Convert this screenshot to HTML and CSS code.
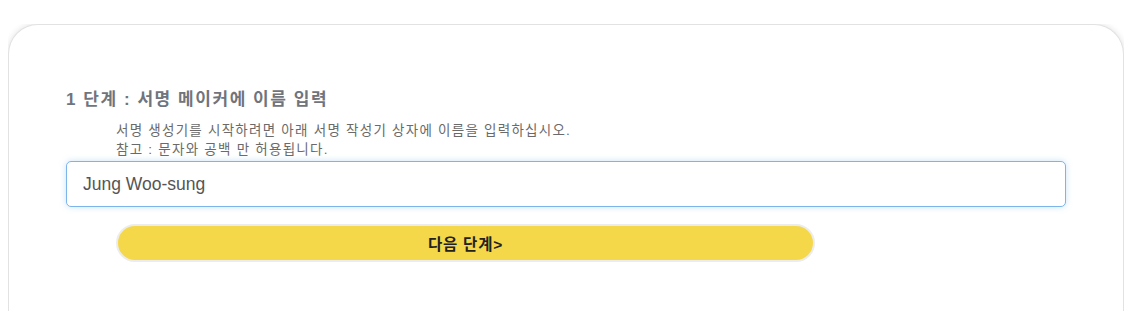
FILE: index.html
```html
<!DOCTYPE html>
<html lang="ko">
<head>
    <meta charset="UTF-8">
    <meta name="viewport" content="width=device-width, initial-scale=1.0">
    <title>서명 메이커</title>
    <link rel="stylesheet" href="styles.css">
</head>
<body>

    <div class="card">
        <h3 class="step-title">1 단계 : 서명 메이커에 이름 입력</h3>
        <p class="step-desc">
            서명 생성기를 시작하려면 아래 서명 작성기 상자에 이름을 입력하십시오.<br>
            참고 : 문자와 공백 만 허용됩니다.
        </p>
        <input type="text" class="name-input" value="Jung Woo-sung">
        <button class="next-btn">다음 단계&gt;</button>
    </div>

</body>
</html>
```

FILE: styles.css
```css
body {
    font-family: "Liberation Sans", "Noto Sans CJK KR", Arial, sans-serif;
    margin: 24px 11px 0 8px;
    background-color: #fff;
}
.card {
    border: 1px solid #e2e2e2;
    border-bottom: none;
    border-radius: 30px 30px 0 0;
    box-shadow: 0 0 6px rgba(0, 0, 0, 0.12);
    padding: 65px 57px 60px 57px;
    background-color: #fff;
}
.step-title {
    margin: 0;
    font-size: 17px;
    line-height: 20px;
    font-weight: bold;
    letter-spacing: 1.55px;
    color: #70747c;
}
.step-desc {
    margin: 11px 0 2px 50px;
    font-size: 13.5px;
    line-height: 19px;
    letter-spacing: 1.25px;
    color: #6a6a6a;
}
.name-input {
    display: block;
    box-sizing: border-box;
    width: 1000px;
    height: 46px;
    margin: 0;
    padding: 0 16px;
    font-family: "Liberation Sans", "Noto Sans CJK KR", sans-serif;
    font-size: 17.5px;
    color: #555;
    border: 1px solid #7cb5ea;
    border-radius: 5px;
    box-shadow: 0 0 6px rgba(102, 175, 233, 0.35);
    outline: none;
}
.next-btn {
    display: block;
    box-sizing: border-box;
    width: 699px;
    height: 38px;
    margin: 17px 0 0 50px;
    font-family: "Liberation Sans", "Noto Sans CJK KR", sans-serif;
    font-size: 15.5px;
    font-weight: bold;
    letter-spacing: 0.8px;
    color: #222;
    background-color: #f5d84a;
    border: 2px solid #ececec;
    border-radius: 19px;
    cursor: pointer;
}
```
